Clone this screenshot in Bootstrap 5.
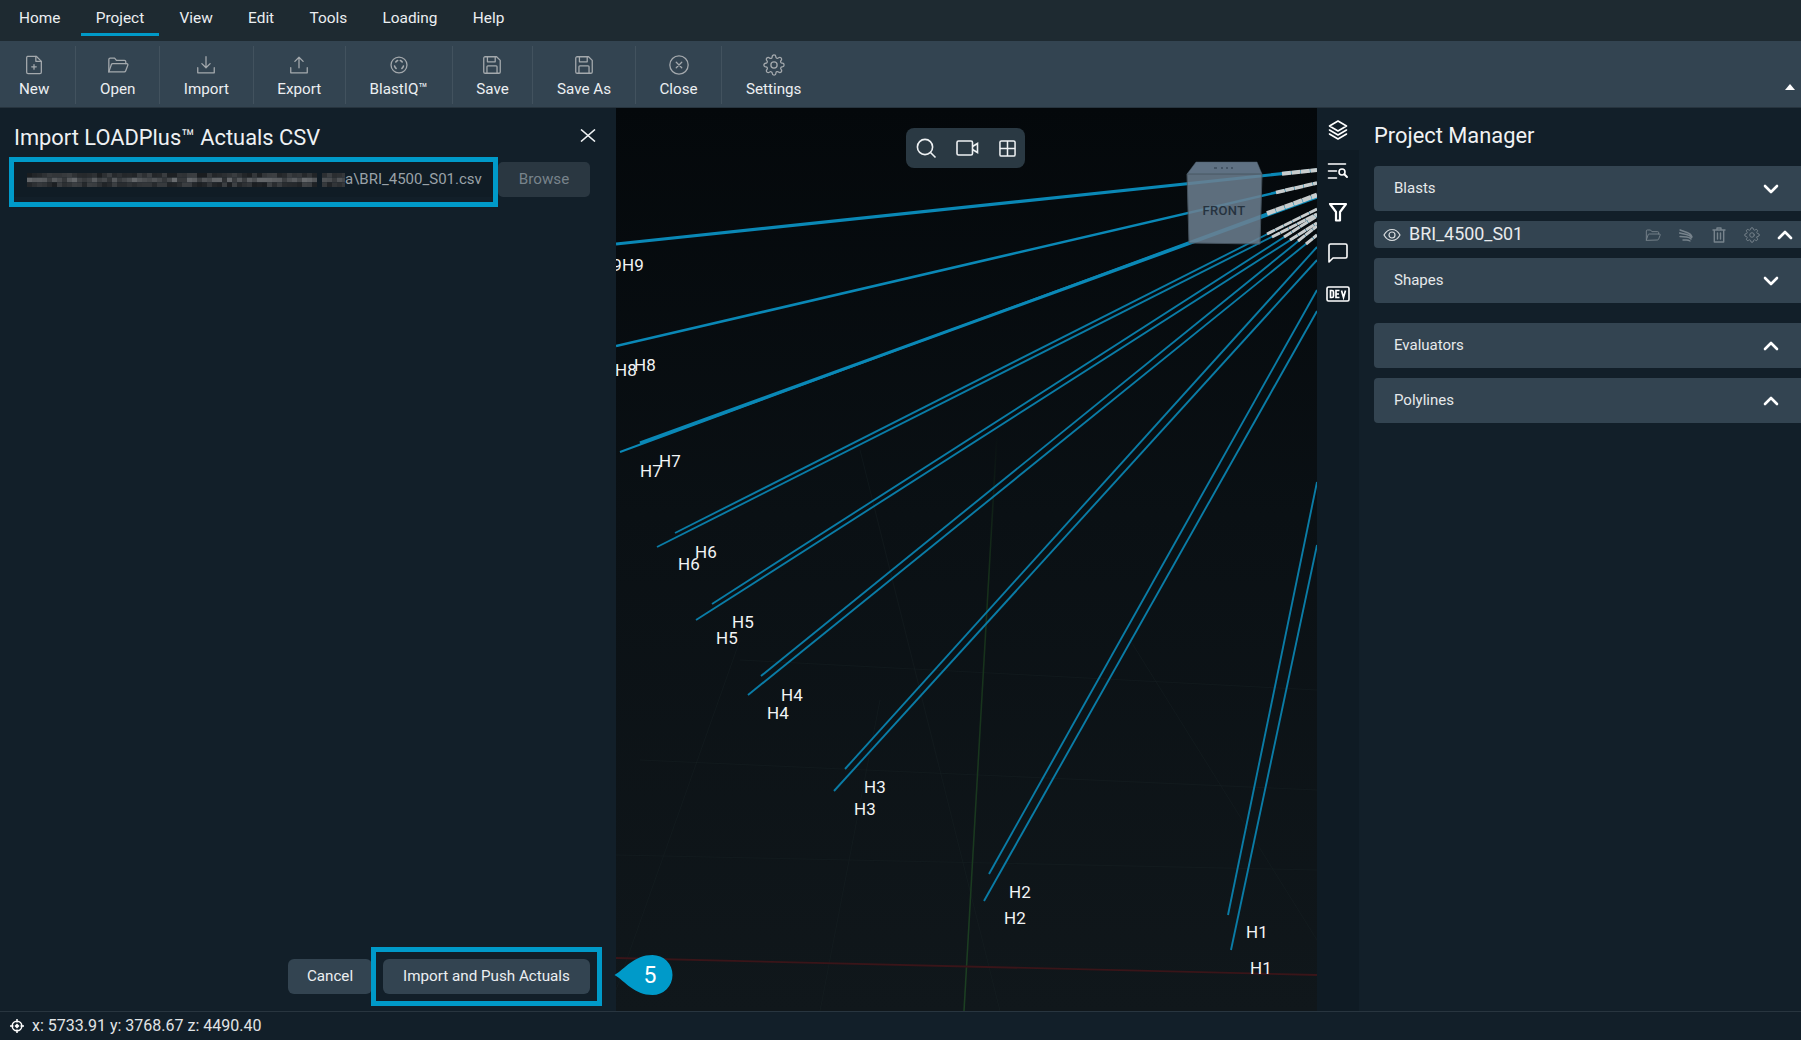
<!DOCTYPE html>
<html lang="en">
<head>
<meta charset="utf-8">
<title>Import LOADPlus Actuals CSV</title>
<link href="https://cdn.jsdelivr.net/npm/bootstrap@5.3.0/dist/css/bootstrap.min.css" rel="stylesheet">
<style>
html,body{height:100%;margin:0;overflow:hidden;}
body{font-family:Roboto,"Liberation Sans",sans-serif;font-size:15px;color:#e6e9eb;background:#121f29;}
.app-shell{width:1801px;height:1040px;}
.menu-bar{height:41px;background:#1e2a31;padding-left:4px;gap:5.3px;flex:none;}
.menu-bar .nav-link{color:#eceff1;font-size:15.4px;line-height:20px;padding:8px 15px 5px;border-bottom:3px solid transparent;height:36px;}
.menu-bar .nav-link.active{border-bottom-color:#009ac9;}
.tool-bar{height:67px;background:#334451;box-shadow:inset 0 -1px 0 #27343e;flex:none;padding-top:5px;}
.tool-btn{height:58px;padding:8px 23.7px 0;border-right:1px solid #42525e;color:#eceff1;font-size:15.2px;line-height:20px;}
.tool-btn:first-child{padding-left:19px;padding-right:26px;}
.tool-btn:last-of-type{border-right:0;}
.tool-btn svg{display:block;margin:0 auto 3px;width:22px;height:22px;fill:none;stroke:#a4a9ad;stroke-width:1.4;stroke-linecap:round;stroke-linejoin:round;}
.collapse-caret{margin:38px 6px 0 auto;width:10px;height:6px;fill:#fff;}
.main-area{min-height:0;}
.left-pane{width:616px;flex:none;background:#121f29;padding:0 26px 17px 14px;}
.pane-title{font-size:21.85px;line-height:25px;color:#eef1f3;font-weight:400;margin:0;}
.title-row{height:54px;padding-top:17px;}
.close-x{width:16px;height:13px;margin-right:-6px;stroke:#eef1f3;stroke-width:1.6;fill:none;}
.path-field{height:35px;padding:0 8px 0 13px;font-size:15px;color:#9aa2a8;background:#101c25;border:0;border-radius:0;min-width:0;}
.mosaic-box{width:318px;height:14px;flex:none;}
.browse-btn,.browse-btn:disabled{width:92px;height:35px;flex:none;background:#2a3741;color:#78838b;font-size:15.2px;border:0;padding:0;border-radius:5px;margin-left:1px;opacity:1;}
.act-btn{height:35px;background:#334451;color:#eceff1;font-size:15.2px;border:0;padding:0;border-radius:6px;flex:none;}
.act-cancel{width:84px;margin-right:11px;}
.act-push{width:207px;}
.hl-box{position:absolute;border:5px solid #009ac9;pointer-events:none;}
.hl-path{left:9px;top:49px;width:489px;height:50px;}
.hl-push{left:371px;top:839px;width:231px;height:59px;}
.callout-tip{position:absolute;left:614px;top:847px;width:59px;height:40px;}
.view-pane{width:701px;flex:none;background:linear-gradient(180deg,#04080b 0%,#0a1014 45%,#10171b 100%);overflow:hidden;}
.view-svg{display:block;width:701px;height:903px;}
.float-tools{position:absolute;left:290px;top:20px;width:119px;height:40px;background:#2a3943;border-radius:8px;padding-left:10px;}
.float-tools svg{fill:none;stroke:#eef1f3;stroke-width:1.6;flex:none;}
.float-cam{margin-left:19px;}
.float-grid{margin-left:20px;}
.rail{width:42px;flex:none;background:#0f1b24;}
.rail-item{height:41px;color:#fff;padding-top:1px;}
.rail-item:first-child{background:#121f29;height:42px;padding-top:2px;}
.rail-item svg{fill:none;stroke:#fff;stroke-width:1.6;stroke-linecap:round;stroke-linejoin:round;}
.right-pane{width:442px;flex:none;background:#121f29;padding-left:15px;}
.pm-title{font-size:21.85px;line-height:26px;padding-top:15px;height:58px;margin:0;color:#f0f2f4;font-weight:400;}
.sect-row{height:45px;background:#334451;border-radius:4px 0 0 4px;padding:0 22px 0 20px;margin-bottom:10px;font-size:15px;color:#e6e9eb;}
.sect-gap{margin-bottom:20px;}
.chev{width:16px;height:10px;fill:none;stroke:#fff;stroke-width:2.6;stroke-linecap:round;stroke-linejoin:round;flex:none;}
.blast-row{height:27px;background:#334451;border-radius:4px 0 0 4px;margin-bottom:10px;padding-left:9px;font-size:17.9px;color:#e8ebed;}
.blast-name{margin-left:8px;}
.row-icon{width:33px;flex:none;}
.row-icon svg{fill:none;stroke:#77838c;stroke-width:1.4;stroke-linecap:round;stroke-linejoin:round;display:block;}
.row-icon svg.chev{stroke:#fff;stroke-width:2.6;}
.status-bar{height:29px;background:#121f29;border-top:1px solid #28353f;padding-left:10px;font-size:16px;color:#e1e4e6;flex:none;}
.status-bar svg{margin-right:8px;}
.hole-label{font-family:Roboto,"Liberation Sans",sans-serif;font-size:17px;fill:#f2f4f5;}
.cube-text{font-family:Roboto,"Liberation Sans",sans-serif;font-size:13px;font-weight:500;fill:#26333f;letter-spacing:.3px;}
.num-text{font-family:Roboto,"Liberation Sans",sans-serif;font-size:23px;fill:#fff;}
</style>
</head>
<body>
<svg width="0" height="0" class="position-absolute">
  <defs>
    <symbol id="ico-gear" viewBox="0 0 24 24"><circle cx="12" cy="12" r="3.4"/><path d="M19.4 15a1.65 1.65 0 0 0 .33 1.82l.06.06a2 2 0 0 1 0 2.83 2 2 0 0 1-2.83 0l-.06-.06a1.65 1.65 0 0 0-1.82-.33 1.65 1.65 0 0 0-1 1.51V21a2 2 0 0 1-2 2 2 2 0 0 1-2-2v-.09A1.65 1.65 0 0 0 9 19.4a1.65 1.65 0 0 0-1.82.33l-.06.06a2 2 0 0 1-2.83 0 2 2 0 0 1 0-2.83l.06-.06a1.65 1.65 0 0 0 .33-1.82 1.65 1.65 0 0 0-1.51-1H3a2 2 0 0 1-2-2 2 2 0 0 1 2-2h.09A1.65 1.65 0 0 0 4.6 9a1.65 1.65 0 0 0-.33-1.82l-.06-.06a2 2 0 0 1 0-2.83 2 2 0 0 1 2.83 0l.06.06a1.65 1.65 0 0 0 1.82.33H9a1.65 1.65 0 0 0 1-1.51V3a2 2 0 0 1 2-2 2 2 0 0 1 2 2v.09a1.65 1.65 0 0 0 1 1.51 1.65 1.65 0 0 0 1.82-.33l.06-.06a2 2 0 0 1 2.83 0 2 2 0 0 1 0 2.83l-.06.06a1.65 1.65 0 0 0-.33 1.82V9a1.65 1.65 0 0 0 1.51 1H21a2 2 0 0 1 2 2 2 2 0 0 1-2 2h-.09a1.65 1.65 0 0 0-1.51 1z"/></symbol>
    <symbol id="ico-save" viewBox="0 0 24 24"><path d="M3 4.5A1.5 1.5 0 0 1 4.5 3H17l4 4v12.5a1.5 1.5 0 0 1-1.500 1.500h-15A1.500 1.500 0 0 1 3 19.500z"/><path d="M7 3v5.500h8.500V3M6.500 21v-7a1 1 0 0 1 1-1h9a1 1 0 0 1 1 1v7"/></symbol>
    <symbol id="ico-folder" viewBox="0 0 24 24"><path d="M2 19.500V6A1.500 1.500 0 0 1 3.500 4.500h4.800l2 2.500H19A1.500 1.500 0 0 1 20.500 8.500v2"/><path d="M2 19.500l2.800-8a1.500 1.500 0 0 1 1.400-1h15.300a1.300 1.300 0 0 1 1.200 1.800l-2.400 6.200a1.500 1.500 0 0 1-1.400 1z"/></symbol>
  </defs>
</svg>
<div class="app-shell d-flex flex-column">
  <ul class="nav menu-bar">
    <li class="nav-item"><a class="nav-link" href="#">Home</a></li>
    <li class="nav-item"><a class="nav-link active" href="#">Project</a></li>
    <li class="nav-item"><a class="nav-link" href="#">View</a></li>
    <li class="nav-item"><a class="nav-link" href="#">Edit</a></li>
    <li class="nav-item"><a class="nav-link" href="#">Tools</a></li>
    <li class="nav-item"><a class="nav-link" href="#">Loading</a></li>
    <li class="nav-item"><a class="nav-link" href="#">Help</a></li>
  </ul>
  <div class="tool-bar d-flex">
    <div class="tool-btn text-center"><svg viewBox="0 0 24 24"><path d="M5 2.500h9.500L20 8v12a1.500 1.500 0 0 1-1.500 1.500h-13A1.500 1.500 0 0 1 4 20V4a1.500 1.500 0 0 1 1-1.500z"/><path d="M14 2.500V8h6M12 11.500v5M9.500 14h5"/></svg>New</div>
    <div class="tool-btn text-center"><svg viewBox="0 0 24 24"><use href="#ico-folder"/></svg>Open</div>
    <div class="tool-btn text-center"><svg viewBox="0 0 24 24"><path d="M12 3v11.500M7.500 10.500L12 15l4.500-4.500M3 15v5.500h18V15"/></svg>Import</div>
    <div class="tool-btn text-center"><svg viewBox="0 0 24 24"><path d="M12 15V3.500M7.500 8L12 3.500 16.500 8M3 15v5.500h18V15"/></svg>Export</div>
    <div class="tool-btn text-center"><svg viewBox="0 0 24 24"><circle cx="12" cy="12" r="8.700"/><path d="M8.500 8.700A5 5 0 0 1 10.500 7.200M13.500 7.200a5 5 0 0 1 2 1.500M16.800 13.200a5 5 0 0 1-1.600 2.600M8.800 15.800a5 5 0 0 1-1.600-2.600" stroke-width="1.800"/></svg>BlastIQ™</div>
    <div class="tool-btn text-center"><svg viewBox="0 0 24 24"><use href="#ico-save"/></svg>Save</div>
    <div class="tool-btn text-center"><svg viewBox="0 0 24 24"><use href="#ico-save"/></svg>Save As</div>
    <div class="tool-btn text-center"><svg viewBox="0 0 24 24"><circle cx="12" cy="12" r="10"/><path d="M9 9l6 6M15 9l-6 6"/></svg>Close</div>
    <div class="tool-btn text-center"><svg viewBox="0 0 24 24"><use href="#ico-gear"/></svg>Settings</div>
    <svg class="collapse-caret" viewBox="0 0 10 6"><path d="M5 0l5 6H0z"/></svg>
  </div>
  <div class="main-area d-flex flex-grow-1 position-relative">
    <section class="left-pane d-flex flex-column">
      <div class="title-row d-flex justify-content-between align-items-start">
        <h2 class="pane-title">Import LOADPlus™ Actuals CSV</h2>
        <svg class="close-x mt-1" viewBox="0 0 16 13" preserveAspectRatio="none"><path d="M1 .5l14 12M15 .5l-14 12"/></svg>
      </div>
      <div class="d-flex">
        <div class="path-field form-control d-flex align-items-center">
          <svg class="mosaic-box" id="mosaic" viewBox="0 0 318 14"></svg><span class="flex-grow-1">a\BRI_4500_S01.csv</span>
        </div>
        <button class="btn browse-btn" type="button" disabled>Browse</button>
      </div>
      <div class="mt-auto d-flex justify-content-end">
        <button class="btn act-btn act-cancel" type="button">Cancel</button>
        <button class="btn act-btn act-push" type="button">Import and Push Actuals</button>
      </div>
    </section>
    <div class="hl-box hl-path"></div>
    <div class="hl-box hl-push"></div>

    <section class="view-pane position-relative">
      <svg class="view-svg" viewBox="616 108 701 903">
        <defs>
          <linearGradient id="greenFade" x1="0" y1="0" x2="0" y2="1"><stop offset="0" stop-color="#16301a" stop-opacity="0"/><stop offset=".25" stop-color="#16301a"/><stop offset="1" stop-color="#1c4022"/></linearGradient>
        </defs>
        <g stroke="#1a2226" stroke-width="1" fill="none" opacity=".4">
          <path d="M616 990L740 640M1000 1011L860 450M1317 940L1130 640M616 855L1317 870M640 760L1317 790M740 660L1317 690M820 1011L880 700"/>
        </g>
        <path d="M997 433L964 1011" stroke="url(#greenFade)" stroke-width="1.500" fill="none"/>
        <path d="M616 958L1317 975" stroke="#3a1519" stroke-width="1.800" fill="none"/>
        <!-- blue hole traces -->
        <g fill="none" stroke="#0a88b6" stroke-linecap="butt">
          <path d="M616 244L1317 170" stroke-width="3.200"/>
          <path d="M616 346L1317 183" stroke-width="2.600"/>
          <path d="M620 452L1317 195" stroke-width="2"/>
          <path d="M640 443L1317 197" stroke-width="3.200"/>
        </g>
        <g fill="none" stroke="#0a7ca6" stroke-width="1.900">
          <path d="M675 533L1317 209"/><path d="M657 547L1317 214"/>
          <path d="M712 604L1317 216"/><path d="M696 620L1317 223"/>
          <path d="M761 676L1317 226"/><path d="M748 695L1317 235"/>
          <path d="M845 769L1317 247"/><path d="M834 791L1317 260"/>
          <path d="M989 874L1317 290"/><path d="M984 901L1317 311"/>
          <path d="M1228 915L1317 482"/><path d="M1231 950L1317 545"/>
        </g>
        <!-- far ends fade to white -->
        <g fill="none" stroke="#c8cccd" stroke-linecap="butt" stroke-dasharray="9 .5">
          <path d="M1282 173.700L1317 170" stroke-width="4"/>
          <path d="M1276 192.500L1317 183" stroke-width="3.600"/>
          <path d="M1267 213.500L1317 195" stroke-width="4.600"/>
          <path d="M1267 234L1317 209" stroke-width="3"/>
          <path d="M1272 237L1317 214" stroke-width="3"/>
          <path d="M1284 237L1317 216" stroke-width="3"/>
          <path d="M1290 240L1317 223" stroke-width="3"/>
          <path d="M1298 241L1317 226" stroke-width="3"/>
          <path d="M1306 244L1317 235" stroke-width="3"/>
        </g>
        <!-- labels -->
        <g class="hole-label">
          <text x="600" y="271">H9</text><text x="622" y="271">H9</text>
          <text x="615" y="376">H8</text><text x="634" y="371">H8</text>
          <text x="640" y="477">H7</text><text x="659" y="467">H7</text>
          <text x="678" y="570">H6</text><text x="695" y="558">H6</text>
          <text x="716" y="644">H5</text><text x="732" y="628">H5</text>
          <text x="767" y="719">H4</text><text x="781" y="701">H4</text>
          <text x="854" y="815">H3</text><text x="864" y="793">H3</text>
          <text x="1004" y="924">H2</text><text x="1009" y="898">H2</text>
          <text x="1250" y="974">H1</text><text x="1246" y="938">H1</text>
        </g>
        <!-- orientation cube -->
        <g>
          <path d="M1187 174L1196 162H1257L1262 174z" fill="#64778a" opacity=".95" stroke="#536472" stroke-width=".5"/>
          <path d="M1187 174H1262L1260 244L1189 243z" fill="#6c7f90" opacity=".86" stroke="#4d5c68" stroke-width="1"/>
          <path d="M1214 168h3M1221 168h2M1226 168h2M1231 168h2" stroke="#2b3947" stroke-width="1"/>
          <text class="cube-text" x="1224" y="215" text-anchor="middle">FRONT</text>
        </g>
      </svg>
      <div class="float-tools d-flex align-items-center">
        <svg width="21" height="21" viewBox="0 0 21 21"><circle cx="9" cy="9" r="7.600"/><path d="M14.500 14.500l5 5"/></svg>
        <svg class="float-cam" width="23" height="16" viewBox="0 0 23 16"><rect x="1" y="1" width="15.500" height="14" rx="1.500"/><path d="M16.500 6.500l5-3v9l-5-3"/></svg>
        <svg class="float-grid" width="17" height="17" viewBox="0 0 18 18"><rect x="1" y="1" width="16" height="16" rx="1.500"/><path d="M9 1v16M1 9h16"/></svg>
      </div>
    </section>

    <nav class="rail d-flex flex-column">
      <div class="rail-item d-flex align-items-center justify-content-center"><svg width="22" height="22" viewBox="0 0 22 22"><path d="M11 2l8.500 5-8.500 5-8.500-5z"/><path d="M2.500 11l8.500 5 8.500-5M2.500 15l8.500 5 8.500-5"/></svg></div>
      <div class="rail-item d-flex align-items-center justify-content-center"><svg width="22" height="18" viewBox="0 0 22 18"><path d="M1.500 2h17M1.500 9h8M1.500 16h8"/><circle cx="15" cy="10" r="3"/><path d="M17.300 12.300L20 15" stroke-width="2"/></svg></div>
      <div class="rail-item d-flex align-items-center justify-content-center"><svg width="20" height="20" viewBox="0 0 20 20"><path d="M2 2h16l-6 8v8.500H8V10z" stroke-width="2.200"/></svg></div>
      <div class="rail-item d-flex align-items-center justify-content-center"><svg width="22" height="20" viewBox="0 0 22 20"><path d="M2 2.500A1.500 1.500 0 0 1 3.500 1h15A1.500 1.500 0 0 1 20 2.500v11a1.500 1.500 0 0 1-1.500 1.500H6l-4 4z"/></svg></div>
      <div class="rail-item d-flex align-items-center justify-content-center"><svg width="24" height="16" viewBox="0 0 24 16"><rect x="1" y="1" width="22" height="14" rx="1.500" stroke-width="1.600"/><path d="M4.500 4.500v7h1.500a1.500 1.500 0 0 0 1.500-1.500V6A1.500 1.500 0 0 0 6 4.500zM13.500 4.500h-3.500v7h3.500M10 8h3M15.500 4.500l2 7 2-7" stroke-width="1.700" stroke-linecap="butt" stroke-linejoin="miter"/></svg></div>
    </nav>

    <aside class="right-pane">
      <h2 class="pm-title">Project Manager</h2>
      <div class="sect-row d-flex align-items-center justify-content-between"><span>Blasts</span><svg class="chev" viewBox="0 0 16 10"><path d="M2 2l6 6 6-6"/></svg></div>
      <div class="blast-row d-flex align-items-center">
        <svg width="18" height="14" viewBox="0 0 18 14" fill="none" stroke="#d9dcde" stroke-width="1.200"><path d="M1 7c2-3.600 5-5.500 8-5.500S15 3.400 17 7c-2 3.600-5 5.500-8 5.500S3 10.600 1 7z"/><circle cx="9" cy="7" r="3"/></svg>
        <span class="blast-name me-auto">BRI_4500_S01</span>
        <span class="row-icon d-flex justify-content-center"><svg width="18" height="16" viewBox="0 0 24 24"><use href="#ico-folder"/></svg></span>
        <span class="row-icon d-flex justify-content-center"><svg width="14" height="14" viewBox="0 0 14 14"><path d="M1 2l7 2.500c3 1 4.500 2.500 5 4.500M0.500 5l7 1.500c2.500.6 4 1.500 5 3M1 8.500l6.500.5c2 .2 3.500 1 4.500 2M4 12l3.500 0c1.500 0 2.500.4 3.500 1"/></svg></span>
        <span class="row-icon d-flex justify-content-center"><svg width="14" height="16" viewBox="0 0 14 16"><path d="M1 3h12M5 3V1h4v2M2.300 3v12h9.400V3M5.500 6v6M8.500 6v6"/></svg></span>
        <span class="row-icon d-flex justify-content-center"><svg width="16" height="16" viewBox="0 0 24 24"><use href="#ico-gear"/></svg></span>
        <span class="row-icon d-flex justify-content-center"><svg class="chev" viewBox="0 0 16 10"><path d="M2 8l6-6 6 6"/></svg></span>
      </div>
      <div class="sect-row sect-gap d-flex align-items-center justify-content-between"><span>Shapes</span><svg class="chev" viewBox="0 0 16 10"><path d="M2 2l6 6 6-6"/></svg></div>
      <div class="sect-row d-flex align-items-center justify-content-between"><span>Evaluators</span><svg class="chev" viewBox="0 0 16 10"><path d="M2 8l6-6 6 6"/></svg></div>
      <div class="sect-row d-flex align-items-center justify-content-between"><span>Polylines</span><svg class="chev" viewBox="0 0 16 10"><path d="M2 8l6-6 6 6"/></svg></div>
    </aside>
    <svg class="callout-tip" viewBox="0 0 59 40"><path d="M0.500 20C11 14 20 0 38.500 0a20 20 0 0 1 0 40C20 40 11 26 .5 20z" fill="#009ac9"/><text class="num-text" x="36" y="28" text-anchor="middle">5</text></svg>
  </div>
  <div class="status-bar d-flex align-items-center">
    <svg width="14" height="14" viewBox="0 0 14 14" fill="none" stroke="#fff"><circle cx="7" cy="7" r="4.800" stroke-width="1.500"/><path d="M7 0v3.500M7 10.500V14M0 7h3.500M10.500 7H14" stroke-width="1.500"/><path d="M7 4.500L9.500 7 7 9.500 4.500 7z" fill="#fff" stroke="none"/></svg>
    <span>x: 5733.91 y: 3768.67 z: 4490.40</span>
  </div>
</div>
<script src="https://cdn.jsdelivr.net/npm/bootstrap@5.3.0/dist/js/bootstrap.bundle.min.js"></script>
<script>
(function(){
  var s=document.getElementById('mosaic'),seed=7,out='';
  function r(){seed=(seed*16807)%2147483647;return seed/2147483647;}
  for(var x=0;x<318;x+=5){
    if(x===290)continue;
    for(var y=0;y<3;y++){
      var v=Math.round(y===1?46+r()*58:26+r()*36);
      out+='<rect x="'+x+'" y="'+(y*14/3)+'" width="5" height="4.700" fill="rgb('+v+','+(v+3)+','+(v+6)+')"/>';
    }
  }
  s.innerHTML=out;
})();
</script>
</body>
</html>
